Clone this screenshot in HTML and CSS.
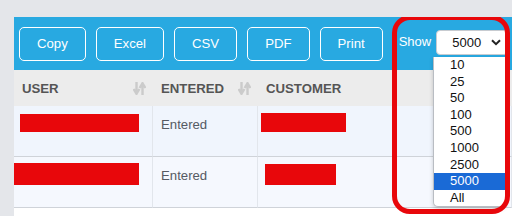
FILE: index.html
```html
<!DOCTYPE html>
<html>
<head>
<meta charset="utf-8">
<link rel="stylesheet" href="styles.css">
</head>
<body>
<div class="panel">
  <div class="toolbar">
    <button class="btn">Copy</button>
    <button class="btn">Excel</button>
    <button class="btn">CSV</button>
    <button class="btn">PDF</button>
    <button class="btn">Print</button>
    <label class="show">Show</label>
    <div class="select">
      <span>5000</span>
      <svg class="chev" width="10" height="7" viewBox="0 0 10 7"><path d="M1 1.2 L5 5.2 L9 1.2" fill="none" stroke="#222" stroke-width="2"/></svg>
    </div>
  </div>
  <div class="table">
    <div class="th">USER <svg class="sort" width="13" height="13" viewBox="0 0 13 13"><path d="M3.5 0 V10 M0.6 7 L3.5 11.8 L6.4 7" fill="none" stroke="#cbcbcb" stroke-width="2.4"/><path d="M9.5 13 V3 M6.6 6 L9.5 1.2 L12.4 6" fill="none" stroke="#cbcbcb" stroke-width="2.4"/></svg></div>
    <div class="th">ENTERED <svg class="sort" width="13" height="13" viewBox="0 0 13 13"><path d="M3.5 0 V10 M0.6 7 L3.5 11.8 L6.4 7" fill="none" stroke="#cbcbcb" stroke-width="2.4"/><path d="M9.5 13 V3 M6.6 6 L9.5 1.2 L12.4 6" fill="none" stroke="#cbcbcb" stroke-width="2.4"/></svg></div>
    <div class="th">CUSTOMER</div>

    <div class="td r1"><span class="redact u1"></span></div>
    <div class="td r1">Entered</div>
    <div class="td r1"><span class="redact c1"></span></div>

    <div class="td r2"><span class="redact u2"></span></div>
    <div class="td r2">Entered</div>
    <div class="td r2"><span class="redact c2"></span></div>
  </div>
  <ul class="options">
    <li>10</li>
    <li>25</li>
    <li>50</li>
    <li>100</li>
    <li>500</li>
    <li>1000</li>
    <li>2500</li>
    <li class="sel">5000</li>
    <li>All</li>
  </ul>
  <div class="annot"></div>
</div>
</body>
</html>
```
FILE: styles.css
```css
html, body {
  margin: 0;
  padding: 0;
}
body {
  background: #e4e6ea;
  width: 512px;
  height: 216px;
  overflow: hidden;
  font-family: "Liberation Sans", Arial, sans-serif;
  font-size: 13px;
}
.panel {
  position: relative;
  margin: 17px 0 0 14px;
  width: 498px;
  background: #ffffff;
  height: 199px;
  overflow: hidden;
}
.toolbar {
  background: #28a9e1;
  height: 53px;
  box-sizing: border-box;
  padding: 10px 0 0 5px;
  display: flex;
  align-items: flex-start;
}
.btn {
  height: 34px;
  margin-right: 10px;
  padding: 0 17px;
  border: 1px solid #ffffff;
  border-radius: 5px;
  background: transparent;
  color: #ffffff;
  font-family: inherit;
  font-size: 13.2px;
  line-height: 32px;
}
.show {
  color: #ffffff;
  margin-left: 6px;
  line-height: 30px;
  font-size: 13px;
}
.select {
  margin-left: 5px;
  margin-top: 3px;
  width: 72px;
  height: 25px;
  box-sizing: border-box;
  background: #ffffff;
  border: 1px solid #c7cbd0;
  border-radius: 4px;
  display: flex;
  align-items: center;
  padding: 0 6px 0 15px;
  justify-content: space-between;
  color: #111;
  font-size: 13px;
}
.chev {
  display: block;
}
.table {
  display: grid;
  grid-template-columns: 139px 105px 1fr;
}
.th {
  background: #ececec;
  height: 36px;
  box-sizing: border-box;
  padding: 0 8px;
  display: flex;
  align-items: center;
  justify-content: space-between;
  font-weight: bold;
  color: #555555;
  font-size: 13.2px;
}
.th:last-child {
  justify-content: flex-start;
}
.sort {
  display: block;
  margin-right: -1px;
}
.td {
  height: 51px;
  box-sizing: border-box;
  border-bottom: 1px solid #cfd3d9;
  border-right: 1px solid #e2e6ec;
  padding: 11px 8px 0 8px;
  color: #555a63;
  font-size: 13.2px;
  line-height: 15px;
}
.r1 { background: #f0f5fd; }
.r2 { background: #f5f8fe; }
.redact {
  display: block;
  background: #e8070b;
}
.u1 { width: 119px; height: 18px; margin: -3px 0 0 -2px; }
.u2 { width: 125px; height: 22px; margin: -5px 0 0 -8px; }
.c1 { width: 85px; height: 19px; margin: -4px 0 0 -5px; }
.c2 { width: 71px; height: 21px; margin: -4px 0 0 -1px; }
.options {
  position: absolute;
  left: 419px;
  top: 40px;
  width: 71px;
  margin: 0;
  padding: 0;
  list-style: none;
  background: #ffffff;
  border: 1px solid #b9bdc3;
  border-top: none;
  border-radius: 0 0 5px 5px;
  box-shadow: 0 2px 4px rgba(0,0,0,0.18);
  font-size: 13px;
  color: #111;
}
.options li {
  height: 16.6px;
  line-height: 16.6px;
  padding-left: 16px;
}
.options li.sel {
  background: #1a6ad6;
  color: #ffffff;
}
.annot {
  position: absolute;
  left: 378px;
  top: -2px;
  width: 118px;
  height: 199px;
  box-sizing: border-box;
  border: 5.5px solid #e8070b;
  border-radius: 18px;
}
```
